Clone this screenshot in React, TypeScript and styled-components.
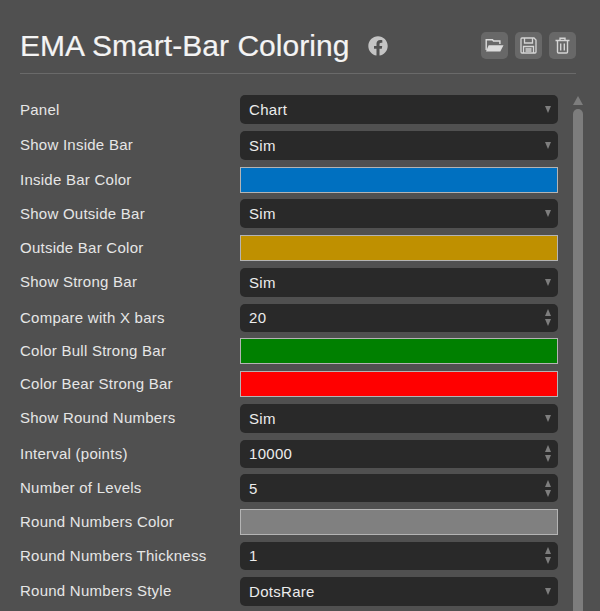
import styled, { createGlobalStyle } from 'styled-components'
import { FaFacebook } from 'react-icons/fa'

const GlobalStyle = createGlobalStyle`
  html, body { margin: 0; padding: 0; background: #505050; }
  body { width: 600px; height: 611px; overflow: hidden; }
`

const Page = styled.div`
  width: 600px;
  height: 611px;
  box-sizing: border-box;
  padding: 22px 24px 0 20px;
  background: #505050;
  overflow: hidden;
  font-family: 'Liberation Sans', Arial, sans-serif;
`

const Header = styled.div`
  display: flex;
  align-items: center;
  height: 52px;
  padding-bottom: 4px;
  box-sizing: border-box;
  border-bottom: 1px solid #6a6a6a;
`

const Title = styled.h1`
  margin: 0;
  font: 400 30px 'Liberation Sans', Arial, sans-serif;
  letter-spacing: 0.05px;
  color: #f4f4f4;
  -webkit-text-stroke: 0.2px #f4f4f4;
`

const Social = styled.span`
  display: flex;
  margin: 0 0 0 18px;
  color: #c4c4c4;
  font-size: 20px;
`

const Tools = styled.div`
  display: flex;
  gap: 7px;
  margin-left: auto;
`

const ToolButton = styled.div`
  width: 27px;
  height: 27px;
  border-radius: 5px;
  background: #686868;
  display: flex;
  align-items: center;
  justify-content: center;
`

const Body = styled.div`
  display: flex;
  padding-top: 21px;
`

const Form = styled.div`
  width: 538px;
  display: flex;
  flex-direction: column;
  gap: 6.75px;
  flex: none;
`

const Row = styled.div`
  display: grid;
  grid-template-columns: 220px 318px;
  align-items: center;
`

const Label = styled.label`
  font-size: 15px;
  letter-spacing: 0.25px;
  color: #e6e6e6;
  padding-bottom: 1px;
`

const Field = styled.div<{ $height: number }>`
  height: ${(p) => p.$height}px;
  box-sizing: border-box;
  padding: 0 6px 0 9px;
  border-radius: 5px;
  background: #292929;
  color: #ececec;
  font-size: 15px;
  letter-spacing: 0.3px;
  display: flex;
  align-items: center;
  justify-content: space-between;
`

const Swatch = styled.div<{ $color: string }>`
  height: 26px;
  box-sizing: border-box;
  background: ${(p) => p.$color};
  border: 1px solid #b4b4b4;
`

const SpinArrows = styled.span`
  display: flex;
  flex-direction: column;
  gap: 3px;
`

const Arrow = styled.i<{ $up?: boolean }>`
  display: block;
  width: 0;
  height: 0;
  margin: 0 1px;
  border-left: 3.5px solid transparent;
  border-right: 3.5px solid transparent;
  border-${(p) => (p.$up ? 'bottom' : 'top')}: 7px solid #7e7e7e;
`

const Scrollbar = styled.div`
  margin-left: 15px;
  width: 10px;
  display: flex;
  flex-direction: column;
  align-items: center;
`

const ScrollUp = styled.i`
  display: block;
  width: 0;
  height: 0;
  border-left: 5px solid transparent;
  border-right: 5px solid transparent;
  border-bottom: 9px solid #7d7d7d;
  margin-top: 1px;
`

const ScrollThumb = styled.div`
  width: 10px;
  height: 520px;
  margin-top: 4px;
  border-radius: 5px 5px 0 0;
  background: #7d7d7d;
`

type Item =
  | { label: string; kind: 'select' | 'spin'; value: string }
  | { label: string; kind: 'color'; color: string }

const items: Item[] = [
  { label: 'Panel', kind: 'select', value: 'Chart' },
  { label: 'Show Inside Bar', kind: 'select', value: 'Sim' },
  { label: 'Inside Bar Color', kind: 'color', color: '#0070c0' },
  { label: 'Show Outside Bar', kind: 'select', value: 'Sim' },
  { label: 'Outside Bar Color', kind: 'color', color: '#bf9000' },
  { label: 'Show Strong Bar', kind: 'select', value: 'Sim' },
  { label: 'Compare with X bars', kind: 'spin', value: '20' },
  { label: 'Color Bull Strong Bar', kind: 'color', color: '#008000' },
  { label: 'Color Bear Strong Bar', kind: 'color', color: '#ff0000' },
  { label: 'Show Round Numbers', kind: 'select', value: 'Sim' },
  { label: 'Interval (points)', kind: 'spin', value: '10000' },
  { label: 'Number of Levels', kind: 'spin', value: '5' },
  { label: 'Round Numbers Color', kind: 'color', color: '#808080' },
  { label: 'Round Numbers Thickness', kind: 'spin', value: '1' },
  { label: 'Round Numbers Style', kind: 'select', value: 'DotsRare' },
]

const App = () => (
  <Page>
    <GlobalStyle />
    <Header>
      <Title>EMA Smart-Bar Coloring</Title>
      <Social>
        <FaFacebook />
      </Social>
      <Tools>
        <ToolButton>
          <svg width="19" height="15" viewBox="0 0 19 15" fill="none">
            <path d="M1.2 12V1.7h6.3l1 1.3h6.4v3" stroke="#dcdcdc" strokeWidth="1.4" />
            <path d="M1 13.5 3.6 7.2h14.9l-3.2 6.3z" fill="#dcdcdc" />
          </svg>
        </ToolButton>
        <ToolButton>
          <svg width="17" height="17" viewBox="0 0 17 17" fill="none" stroke="#d4d4d4" strokeWidth="1.3">
            <path d="M1 2a1 1 0 0 1 1-1h12l2 2v12a1 1 0 0 1-1 1H2a1 1 0 0 1-1-1z" />
            <path d="M4.5 1v5h8V1M3.5 16V9.5h10V16M5.5 12h6M5.5 14h6" />
          </svg>
        </ToolButton>
        <ToolButton>
          <svg width="15" height="17" viewBox="0 0 15 17" fill="none" stroke="#d4d4d4" strokeWidth="1.4">
            <path d="M0.5 3.5h14M5 3.5V1.2h5v2.3M2.5 3.5V15a1 1 0 0 0 1 1h8a1 1 0 0 0 1-1V3.5M5.7 6.5v7M9.3 6.5v7" />
          </svg>
        </ToolButton>
      </Tools>
    </Header>
    <Body>
      <Form>
        {items.map((item) => (
          <Row key={item.label}>
            <Label>{item.label}</Label>
            {item.kind === 'color' ? (
              <Swatch $color={item.color} />
            ) : (
              <Field $height={item.kind === 'spin' ? 28 : 29}>
                {item.value}
                {item.kind === 'spin' ? (
                  <SpinArrows>
                    <Arrow $up />
                    <Arrow />
                  </SpinArrows>
                ) : (
                  <Arrow />
                )}
              </Field>
            )}
          </Row>
        ))}
      </Form>
      <Scrollbar>
        <ScrollUp />
        <ScrollThumb />
      </Scrollbar>
    </Body>
  </Page>
)

export default App
